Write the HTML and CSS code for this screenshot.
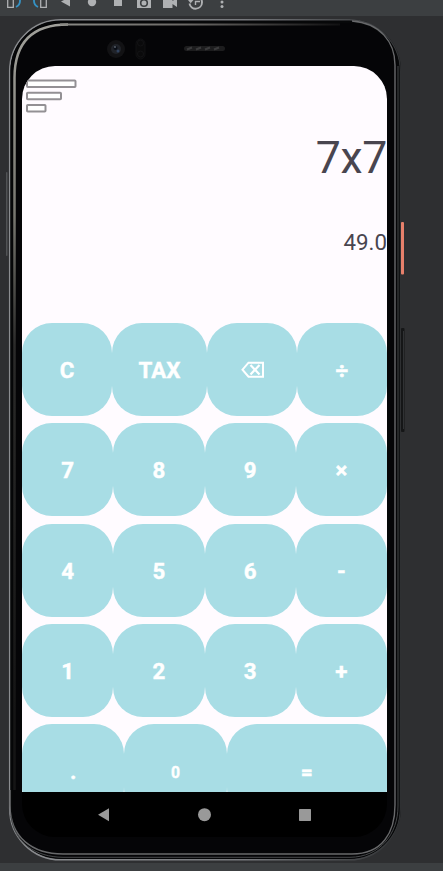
FILE: index.html
```html
<!DOCTYPE html>
<html lang="en">
<head>
<meta charset="utf-8">
<title>Calculator</title>
<link rel="stylesheet" href="styles.css">
</head>
<body>
<header class="toolbar">
  <svg class="tools" width="240" height="16" viewBox="0 0 240 16" fill="#afb1b3">
    <path d="M7.700 -4V7.300H13.300V-4M40.700-4V7.300H46.300V-4" fill="none" stroke="#afb1b3" stroke-width="1.300"/>
    <path d="M16 7Q20 5 20 1V-3M38 7Q34 5 34 1V-3" fill="none" stroke="#3592c4" stroke-width="1.800"/>
    <path d="M61 1.500L70-3V6.500Z"/>
    <circle cx="92" cy="2" r="4.200"/>
    <rect x="114" y="-2" width="8" height="8"/>
    <path d="M137-1h14v9h-14z"/>
    <circle cx="144" cy="3" r="3.300" fill="#afb1b3" stroke="#3c3f41" stroke-width="1.600"/>
    <path d="M163-2h9.500v3l4.500-3v9l-4.500-3v4H163z"/>
    <path d="M189.500 3.500A6.300 6.300 0 0 0 202 2.500Q202-2 198-4" fill="none" stroke="#afb1b3" stroke-width="1.900"/>
    <path d="M195.500 5V1.500H200" fill="none" stroke="#afb1b3" stroke-width="1.400"/>
    <path d="M188 0h5.500l-2.800 3.200z"/>
    <circle cx="222" cy="2" r="1.500"/><circle cx="222" cy="6.500" r="1.500"/>
  </svg>
</header>
<main class="stage">
  <svg class="shell" width="443" height="847" viewBox="0 16 443 847" fill="none">
    <defs>
      <linearGradient id="rim" x1="0" y1="0" x2="1" y2="0">
        <stop offset="0" stop-color="#8b8d90"/><stop offset=".6" stop-color="#77797d"/><stop offset="1" stop-color="#303234"/>
      </linearGradient>
      <linearGradient id="inner" gradientUnits="userSpaceOnUse" x1="60" y1="0" x2="340" y2="0">
        <stop offset="0" stop-color="#8a8a85"/><stop offset=".45" stop-color="#6c6a67"/><stop offset="1" stop-color="#111112"/>
      </linearGradient>
      <linearGradient id="side" gradientUnits="userSpaceOnUse" x1="0" y1="24" x2="0" y2="790">
        <stop offset="0" stop-color="#a1a19b"/><stop offset=".25" stop-color="#77776f"/><stop offset=".42" stop-color="#2b2b2a"/><stop offset=".9" stop-color="#151515"/>
      </linearGradient>
    </defs>
    <rect x="6" y="172" width="1.500" height="84" rx=".7" fill="#515355"/>
    <rect x="401" y="222" width="3" height="52.500" rx="1" fill="#e6806b"/>
    <rect x="401" y="328" width="3.500" height="104" rx="1" fill="#151617"/>
    <path d="M403.500 331V429" stroke="#303234"/>
    <rect x="9" y="19" width="392" height="841" rx="52" fill="#050507"/>
    <rect x="9.700" y="19.800" width="390.500" height="840" rx="51" stroke="url(#rim)" stroke-width="1.500"/>
    <rect x="11.500" y="22" width="387" height="835.500" rx="49" stroke="#070809" stroke-width="2"/>
    <path d="M14.500 790V78Q14.500 24.500 68 24.500" stroke="url(#side)" stroke-width="2.500"/>
    <path d="M60 24.400C80 24.200 200 24.500 340 24.600" stroke="url(#inner)" stroke-width="2"/>
    <path d="M352 21C380 23 395 42 395 65V805C395 833 382 854 352 854H63C33 854 10 838 10 805V790" stroke="#68696b" stroke-width="1.400"/>
    <path d="M398 66V806C398 834 380 857 350 857.300H63C36 857 14 843 11 816" stroke="#46484a" stroke-width="1"/>
    <circle cx="116" cy="49" r="9" fill="#121214"/>
    <circle cx="116" cy="49" r="5" fill="#202329"/>
    <circle cx="115.500" cy="48" r="2" fill="#090e16"/>
    <circle cx="118" cy="51" r="1.500" fill="#30425e"/>
    <circle cx="115" cy="47" r=".7" fill="#a8b4c0"/>
    <rect x="136" y="39" width="9" height="20" rx="4.500" fill="#0a0a0b" stroke="#101012"/>
    <circle cx="140.500" cy="43" r="3" stroke="#131315"/><circle cx="140.500" cy="54" r="3" stroke="#131315"/>
    <rect x="184" y="46" width="41" height="5" rx="2.500" fill="#1d1d1e"/>
    <path d="M187 49.500l5-2M196 49.500l5-2M205 49.500l5-2M214 49.500l5-2" stroke="#3b3b3c" stroke-width="2"/>
  </svg>
  <div class="screen">
    <section class="display">
      <svg class="menu" width="54" height="36" viewBox="0 0 54 36" fill="#fff" stroke="#939094" stroke-width="2">
        <rect x="2" y="2.500" width="48.500" height="6.500" rx=".8"/><rect x="2" y="14.800" width="34" height="6.500" rx=".8"/><rect x="2" y="27" width="18.500" height="6.500" rx=".8"/>
      </svg>
      <div class="expression">7x7</div>
      <div class="result">49.0</div>
    </section>
    <section class="keypad">
      <div class="row first">
        <button>C</button><button>TAX</button>
        <button aria-label="Delete"><svg class="erase" width="24" height="18" viewBox="0 0 24 18" fill="none" stroke="#fff" stroke-width="2"><path d="M7.500 1.700H22V15.700H7.500L1.500 8.700Z"/><path d="M9.500 4L18.500 13.500M18.500 4L9.500 13.500" stroke-width="2.200"/></svg></button>
        <button>÷</button>
      </div>
      <div class="row"><button>7</button><button>8</button><button>9</button><button>×</button></div>
      <div class="row"><button>4</button><button>5</button><button>6</button><button>-</button></div>
      <div class="row"><button>1</button><button>2</button><button>3</button><button>+</button></div>
      <div class="row last"><button>.</button><button class="zero">0</button><button class="equals">=</button></div>
    </section>
    <nav class="nav">
      <svg width="365" height="45" viewBox="0 0 365 45" fill="#999"><path d="M76 22.700L87 16.200V29.200Z"/><circle cx="182.500" cy="22.700" r="6.500"/><rect x="277" y="17" width="12" height="12" rx=".7"/></svg>
    </nav>
  </div>
</main>
<footer class="status"></footer>
</body>
</html>
```
FILE: styles.css
```css
* { box-sizing: border-box; }
body {
  margin: 0;
  width: 443px;
  height: 871px;
  overflow: hidden;
  display: flex;
  flex-direction: column;
  background: #2e2f31;
  font-family: Roboto, sans-serif;
}
.toolbar { height: 16px; flex: none; background: #3c3f41; }
svg { display: block; }
.stage { position: relative; height: 847px; flex: none; padding: 50px 56px 26px 22px; }
.shell { position: absolute; left: 0; top: 0; }
.screen {
  position: relative;
  width: 365px;
  height: 771px;
  border-radius: 33px;
  overflow: hidden;
  display: flex;
  flex-direction: column;
}
.display {
  height: 257px;
  flex: none;
  display: flex;
  flex-direction: column;
  padding-top: 12px;
  background: #fffbff;
  color: #49454f;
  text-align: right;
}
.menu { margin-left: 3px; flex: none; }
.expression { margin-top: 18px; font-size: 44.5px; line-height: 52px; letter-spacing: -.3px; }
.result { margin-top: 44px; font-size: 22.3px; line-height: 28px; }
.keypad {
  height: 469px;
  flex: none;
  display: flex;
  flex-direction: column;
  gap: 7.3px;
  overflow: hidden;
  background: #fffbff;
}
.row { flex: none; height: 93px; display: grid; grid-template-columns: repeat(4, 1fr); }
.first { grid-template-columns: 90px 95px 89.500px 90.500px; }
.last { grid-template-columns: 102.300px 102.300px 160.400px; }
button {
  display: flex;
  align-items: center;
  justify-content: center;
  min-width: 0;
  border: 0;
  border-radius: 30px;
  padding: 1px 0 0;
  background: #a8dde5;
  color: #fff;
  font: 700 22.3px/26px Roboto, sans-serif;
  -webkit-text-stroke: .4px #fff;
}
.erase { margin: -1px 0 0 2px; }
.zero { font-size: 15.7px; padding-top: 4px; }
.equals { font-size: 21px; padding-top: 3px; }
.nav { height: 45px; flex: none; background: #000; }
.status { height: 8px; flex: none; background: #3c3f41; }
```
